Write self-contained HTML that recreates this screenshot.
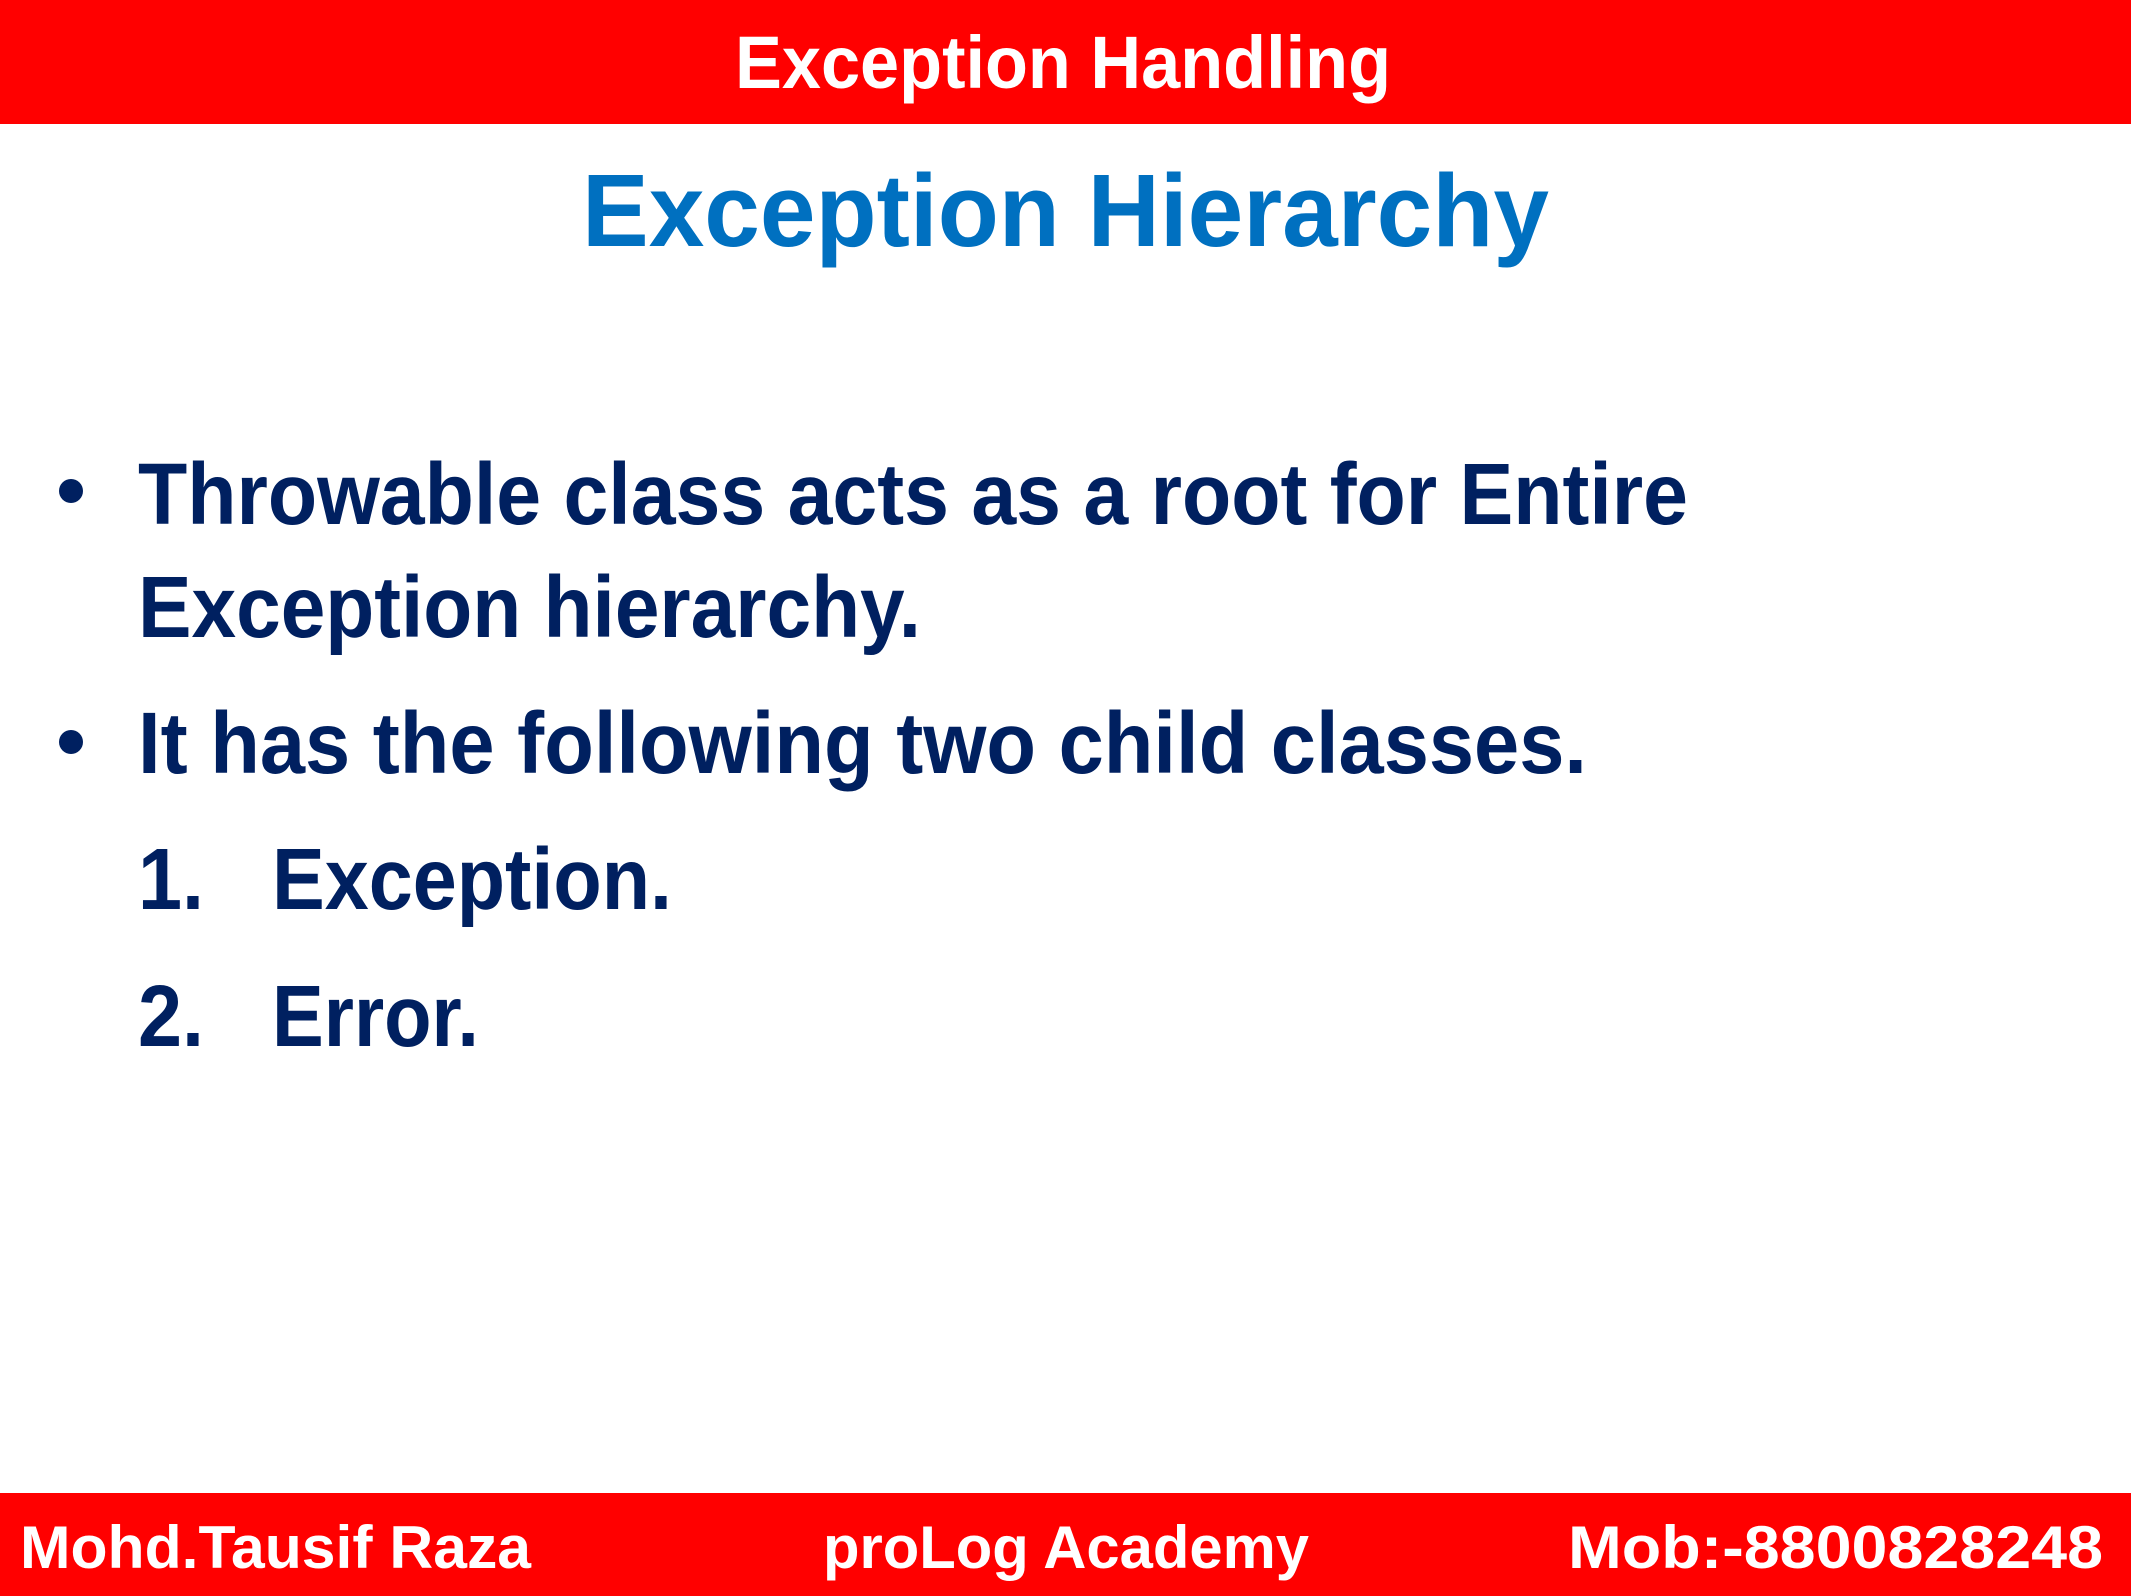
<!DOCTYPE html>
<html><head><meta charset="utf-8"><style>html,body{margin:0;padding:0;background:#fff}svg{display:block}</style></head>
<body>
<svg width="2134" height="1596" viewBox="0 0 2134 1596" xmlns="http://www.w3.org/2000/svg" font-family="Liberation Sans, sans-serif" font-weight="bold">
<rect x="0" y="0" width="2131" height="124" fill="#ff0000"/>
<rect x="0" y="1493" width="2131" height="103" fill="#ff0000"/>
<text x="735" y="88" font-size="74" fill="#fff" textLength="656" lengthAdjust="spacingAndGlyphs">Exception Handling</text>
<text x="582" y="246" font-size="103" fill="#0070c0" textLength="967" lengthAdjust="spacingAndGlyphs">Exception Hierarchy</text>
<g fill="#002060" font-size="87">
<circle cx="71" cy="491" r="12"/>
<circle cx="71" cy="742" r="12"/>
<text x="138" y="524" textLength="1550" lengthAdjust="spacingAndGlyphs">Throwable class acts as a root for Entire</text>
<text x="138" y="637" textLength="783" lengthAdjust="spacingAndGlyphs">Exception hierarchy.</text>
<text x="138" y="773" textLength="1449" lengthAdjust="spacingAndGlyphs">It has the following two child classes.</text>
<text x="138" y="909" textLength="66" lengthAdjust="spacingAndGlyphs">1.</text>
<text x="272" y="909" textLength="400" lengthAdjust="spacingAndGlyphs">Exception.</text>
<text x="138" y="1046" textLength="66" lengthAdjust="spacingAndGlyphs">2.</text>
<text x="272" y="1046" textLength="207" lengthAdjust="spacingAndGlyphs">Error.</text>
</g>
<g fill="#fff" font-size="60">
<text x="20" y="1568" textLength="511" lengthAdjust="spacingAndGlyphs">Mohd.Tausif Raza</text>
<text x="823" y="1568" textLength="486" lengthAdjust="spacingAndGlyphs">proLog Academy</text>
<text x="1568" y="1568" textLength="535" lengthAdjust="spacingAndGlyphs">Mob:-8800828248</text>
</g>
</svg>
</body></html>
